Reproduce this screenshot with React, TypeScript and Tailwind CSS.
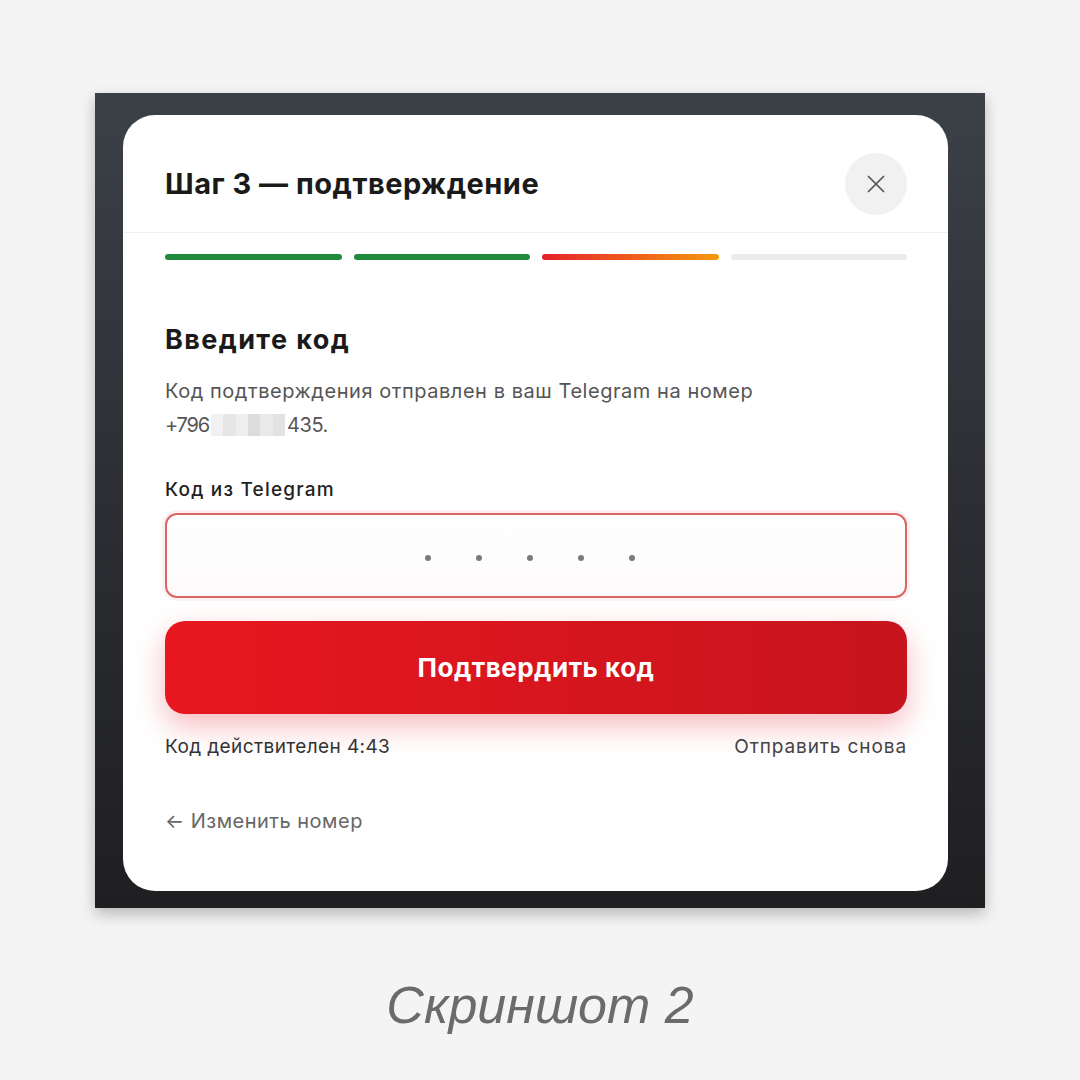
import { X } from 'lucide-react'

const steps = [
  'bg-[#1f8a3b]',
  'bg-[#1f8a3b]',
  'bg-gradient-to-r from-[#e51d2a] via-[#ee5a1a] to-[#f39a0c]',
  'bg-[#ebebeb]',
]

const blur = ['bg-[#f1f1f1]', 'bg-[#e6e6e6]', 'bg-[#eeeeee]', 'bg-[#dcdcdc]', 'bg-[#e9e9e9]', 'bg-[#e2e2e2]']

function Dots() {
  return (
    <div className="flex -translate-x-[6px] translate-y-[2px] items-center gap-[45px]">
      {[0, 1, 2, 3, 4].map((i) => (
        <span key={i} className="h-[6px] w-[6px] rounded-full bg-[#7a7a7a]" />
      ))}
    </div>
  )
}

export default function App() {
  return (
    <div className="flex min-h-screen w-full flex-col items-center bg-[#f4f4f4] font-['Inter',sans-serif]">
      <div className="mt-[93px] h-[815px] w-[890px] bg-gradient-to-b from-[#3c4148] via-[#2c2e33] to-[#1f1f22] pl-[28px] pt-[22px] shadow-[0_6px_14px_rgba(0,0,0,0.25)]">
        <div className="h-[776px] w-[825px] rounded-[32px] bg-white">
          <div className="flex items-center justify-between border-b border-[#f0f0f0] pb-[17px] pl-[42px] pr-[41px] pt-[38px]">
            <h2 className="text-[29px] font-bold tracking-[0.5px] text-[#1a1a1a]">Шаг 3 — подтверждение</h2>
            <button className="flex h-[62px] w-[62px] items-center justify-center rounded-full bg-[#f1f1f1] text-[#555]">
              <X size={30} strokeWidth={1.4} />
            </button>
          </div>

          <div className="pl-[42px] pr-[41px]">
            <div className="mt-[21px] flex gap-[12px]">
              {steps.map((s, i) => (
                <div key={i} className={`h-[6px] flex-1 rounded-full ${s}`} />
              ))}
            </div>

            <h3 className="mt-[64px] text-[27px] font-bold leading-[32px] tracking-[1.4px] text-[#1a1a1a]">Введите код</h3>
            <p className="mt-[18px] text-[20px] leading-[34px] tracking-[0.55px] text-[#555]">
              Код подтверждения отправлен в ваш Telegram на номер
              <br />
              <span className="tracking-[-1.2px]">+796</span>
              <span className="mx-[2px] inline-flex h-[22px] w-[74px] translate-y-[4px] align-baseline">
                {blur.map((b, i) => (
                  <span key={i} className={`h-full flex-1 ${b}`} />
                ))}
              </span>
              <span className="tracking-[-0.4px]">435.</span>
            </p>

            <label className="mt-[35px] block text-[19px] font-medium leading-[26px] tracking-[1.2px] text-[#222]">Код из Telegram</label>
            <div className="mt-[10px] flex h-[85px] items-center justify-center rounded-[12px] border-2 border-[#d96565] bg-gradient-to-b from-white to-[#fdfafa] shadow-[0_0_0_3px_rgba(230,80,80,0.08)]">
              <Dots />
            </div>

            <button className="mt-[23px] flex h-[93px] w-full items-center justify-center rounded-[20px] bg-gradient-to-r from-[#e8171f] to-[#c7141d] text-[26px] font-bold tracking-[0.5px] text-white shadow-[0_12px_30px_rgba(228,30,40,0.3)]">
              Подтвердить код
            </button>

            <div className="mt-[20px] flex items-center justify-between text-[19px] leading-[26px] tracking-[0.4px]">
              <span className="text-[#333]">Код действителен 4:43</span>
              <span className="tracking-[0.9px] text-[#444]">Отправить снова</span>
            </div>

            <div className="mt-[48px] text-[20px] leading-[26px] tracking-[0.5px] text-[#666]">← Изменить номер</div>
          </div>
        </div>
      </div>

      <p className="mt-[71px] font-['Liberation_Sans',sans-serif] text-[52px] italic leading-none text-[#6b6b6b]">Скриншот 2</p>
    </div>
  )
}
